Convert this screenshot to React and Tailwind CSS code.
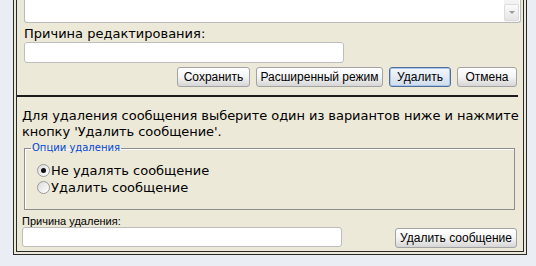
import React from 'react';

const btn =
  "h-5 rounded-[3px] border border-[#a3a3a3] bg-gradient-to-b from-white via-[#f4f4f4] to-[#d6d6d6] text-[12px] leading-none text-black font-['Liberation_Sans',Arial,sans-serif]";

function Radio({ checked, label }) {
  return (
    <label className="flex items-center h-[17px]">
      <span className="w-[13px] h-[13px] rounded-full border border-[#9a9a9a] bg-gradient-to-br from-[#dcdcdc] to-white flex items-center justify-center mr-[1px]">
        {checked && <span className="w-[5px] h-[5px] rounded-full bg-[#111]" />}
      </span>
      <span>{label}</span>
    </label>
  );
}

export default function App() {
  return (
    <div className="w-[536px] h-[266px] bg-[#eaedf4] overflow-hidden font-['DejaVu_Sans',Verdana,sans-serif] text-[13px] leading-4 text-black">
      <div className="ml-[13px] w-[514px] h-[255px] bg-[#ece9d8] border-[4px] border-t-0 border-double border-[#2a2a2a] flex flex-col">
        {/* textarea (scrolled, top cut off) */}
        <div className="ml-[7px] w-[497px] h-[23px] bg-white border border-t-0 border-[#b9b9b9] rounded-b-[3px] flex justify-end">
          <div className="w-[15px] mr-[1px] bg-[#f3f3f1] flex flex-col justify-end pb-[1px]">
            <div className="h-[17px] rounded-[2px] bg-gradient-to-b from-[#fbfbfb] to-[#e4e4e4] border border-[#dcdcdc] flex items-center justify-center">
              <span className="w-0 h-0 border-l-[3px] border-r-[3px] border-t-[3px] border-l-transparent border-r-transparent border-t-[#9a9a9a]" />
            </div>
          </div>
        </div>

        <div className="ml-[7px] mt-[3px]">Причина редактирования:</div>
        <div className="ml-[7px] w-[320px] h-[21px] bg-white border border-[#bdbdbd] rounded-[3px]" />

        <div className="flex justify-end gap-[6px] mr-[6px] mt-[4px]">
          <button className={btn + " w-[73px]"}>Сохранить</button>
          <button className={btn + " w-[127px]"}>Расширенный режим</button>
          <button className="h-5 w-[62px] rounded-[3px] border border-[#4f6f99] bg-gradient-to-b from-[#f4f8fd] to-[#cfdcec] shadow-[inset_0_0_0_1px_#a9c4e6] text-[12px] leading-none font-['Liberation_Sans',Arial,sans-serif]">
            Удалить
          </button>
          <button className={btn + " w-[60px]"}>Отмена</button>
        </div>

        <div className="mt-[8px] w-[501px] h-[2px] bg-[#1c1c1c]" />

        <p className="ml-[5px] mt-[11px] tracking-[-0.05px]">
          Для удаления сообщения выберите один из вариантов ниже и нажмите кнопку 'Удалить сообщение'.
        </p>

        <fieldset className="ml-[7px] mt-[2px] w-[491px] h-[68px] border border-[#8e8e8e] shadow-[inset_1px_1px_0_#fff] px-[12px] pt-0">
          <legend className="ml-[-6px] px-[1px] text-[10px] leading-[12px] text-[#0046d5]">
            Опции удаления
          </legend>
          <div className="mt-[8px]">
            <Radio checked label="Не удалять сообщение" />
            <Radio label="Удалить сообщение" />
          </div>
        </fieldset>

        <div className="ml-[5px] mt-[5px] text-[11px] leading-[12px] font-['Liberation_Sans',Arial,sans-serif]">Причина удаления:</div>
        <div className="flex items-start">
          <div className="ml-[5px] w-[320px] h-[20px] bg-white border border-[#bdbdbd] rounded-[3px]" />
          <button className={btn + " ml-[53px] mt-[1px] w-[122px]"}>Удалить сообщение</button>
        </div>
      </div>
    </div>
  );
}
